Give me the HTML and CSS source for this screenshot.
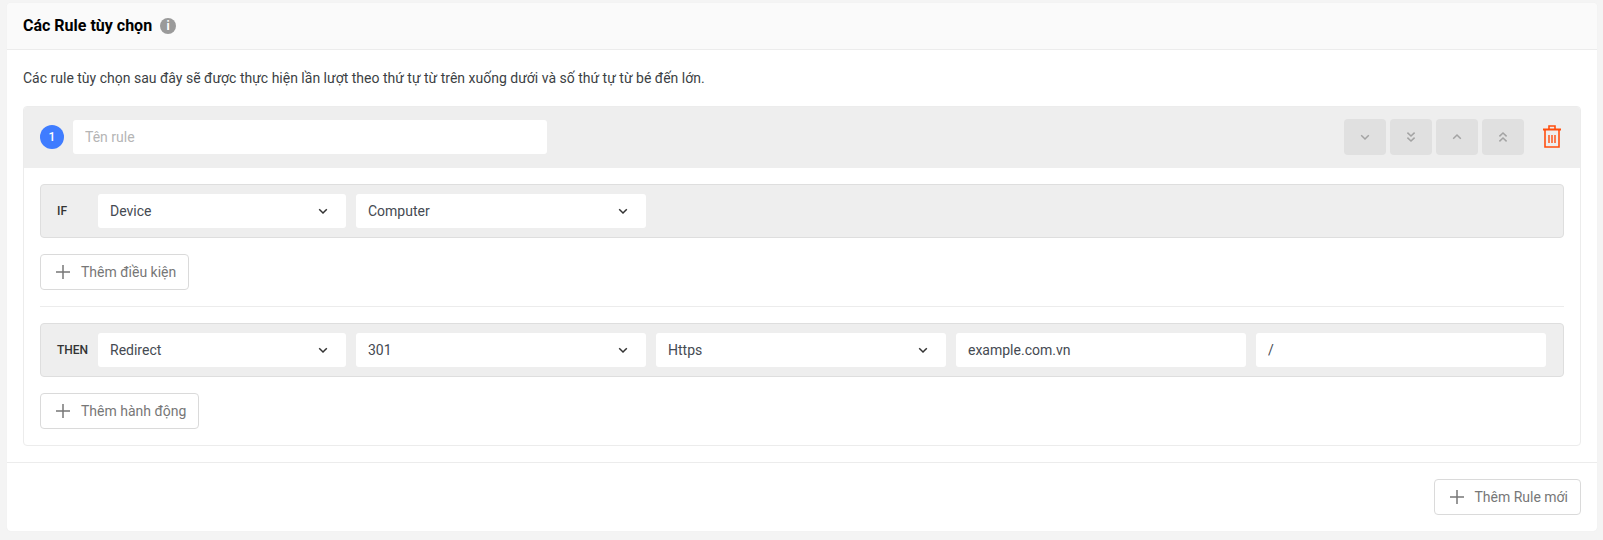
FILE: index.html
```html
<!DOCTYPE html>
<html lang="vi">
<head>
<meta charset="utf-8">
<title>Các Rule tùy chọn</title>
<link rel="stylesheet" href="styles.css">
</head>
<body>
<svg class="defs" width="0" height="0" aria-hidden="true">
  <symbol id="chev" viewBox="0 0 12 12"><path d="M2.2 4.2 6 8l3.8-3.8" fill="none" stroke="currentColor" stroke-width="1.5"/></symbol>
  <symbol id="chev2" viewBox="0 0 12 12"><path d="M2.4 1.6 6 5l3.6-3.4M2.4 6.6 6 10l3.6-3.4" fill="none" stroke="currentColor" stroke-width="1.5"/></symbol>
  <symbol id="plus" viewBox="0 0 14 14"><path d="M7 0v14M0 7h14" fill="none" stroke="currentColor" stroke-width="1.5"/></symbol>
</svg>
<main class="card">
  <header class="card-head">
    <h2 class="card-title">Các Rule tùy chọn</h2>
    <span class="info">i</span>
  </header>
  <section class="card-body">
    <p class="intro">Các rule tùy chọn sau đây sẽ được thực hiện lần lượt theo thứ tự từ trên xuống dưới và số thứ tự từ bé đến lớn.</p>
    <div class="rule">
      <div class="rule-head">
        <span class="num">1</span>
        <input class="field name" placeholder="Tên rule">
        <div class="moves">
          <button class="move"><svg class="mi"><use href="#chev"/></svg></button>
          <button class="move"><svg class="mi"><use href="#chev2"/></svg></button>
          <button class="move"><svg class="mi flip"><use href="#chev"/></svg></button>
          <button class="move"><svg class="mi flip"><use href="#chev2"/></svg></button>
        </div>
        <svg class="trash" viewBox="0 0 18 23">
          <path d="M0 4.500h18" fill="none" stroke="#ff4d0d" stroke-width="2"/>
          <path d="M6 4V1h6v3M2 5v17h14V5" fill="none" stroke="#ff4d0d" stroke-width="1.600"/>
          <path d="M6 10v8M9 10v8M12 10v8" fill="none" stroke="#ff4d0d" stroke-width="1.400"/>
        </svg>
      </div>
      <div class="rule-body">
        <div class="row">
          <span class="tag">IF</span>
          <div class="field select w248"><span>Device</span><svg class="sc"><use href="#chev"/></svg></div>
          <div class="field select"><span>Computer</span><svg class="sc"><use href="#chev"/></svg></div>
        </div>
        <button class="add"><svg class="pi"><use href="#plus"/></svg>Thêm điều kiện</button>
        <hr class="sep">
        <div class="row">
          <span class="tag">THEN</span>
          <div class="field select w248"><span>Redirect</span><svg class="sc"><use href="#chev"/></svg></div>
          <div class="field select"><span>301</span><svg class="sc"><use href="#chev"/></svg></div>
          <div class="field select"><span>Https</span><svg class="sc"><use href="#chev"/></svg></div>
          <input class="field w290" value="example.com.vn">
          <input class="field w290" value="/">
        </div>
        <button class="add"><svg class="pi"><use href="#plus"/></svg>Thêm hành động</button>
      </div>
    </div>
  </section>
  <footer class="card-foot">
    <button class="add"><svg class="pi"><use href="#plus"/></svg>Thêm Rule mới</button>
  </footer>
</main>
</body>
</html>
```
FILE: styles.css
```css
* { box-sizing: border-box; }
html, body { margin: 0; height: 540px; overflow: hidden; }
body {
  background: #f4f4f4;
  padding: 3px 6px 9px 7px;
  font-family: Roboto, "Noto Sans", sans-serif;
  font-size: 14px;
  color: #3d4148;
}
.defs { position: absolute; }
.card {
  height: 528px;
  background: #fff;
  border-radius: 4px;
  box-shadow: 0 0 1px #e4e4e4;
}
.card-head {
  height: 47px;
  background: #fafafa;
  border-bottom: 1px solid #ececec;
  border-radius: 4px 4px 0 0;
  padding: 0 16px;
  display: flex;
  align-items: center;
  gap: 8px;
}
.card-title { margin: 0; font-size: 16px; font-weight: 700; color: #000; line-height: 20px; }
.info {
  width: 16px; height: 16px; border-radius: 50%;
  background: #9a9a9a; color: #fff;
  font-size: 12px; font-weight: 700; line-height: 16px; text-align: center;
}
.card-body {
  height: 413px;
  padding: 0 16px;
  border-bottom: 1px solid #ececec;
}
.intro { margin: 0; padding-top: 18px; height: 56px; line-height: 20px; font-size: 14px; color: #3c3f44; }
.rule {
  height: 340px;
  border: 1px solid #ececec;
  border-radius: 4px;
  overflow: hidden;
}
.rule-head {
  height: 61px;
  background: #eeeeee;
  padding: 0 19px 2px 16px;
  display: flex;
  align-items: center;
}
.num {
  width: 24px; height: 24px; border-radius: 50%;
  background: #3f7cff; color: #fff;
  font-size: 12px; font-weight: 500; line-height: 24px; text-align: center;
  margin-right: 9px;
  flex: none;
}
.field {
  height: 34px;
  border: 0;
  border-radius: 3px;
  background: #fff;
  padding: 0 12px;
  font: 14px Roboto, "Noto Sans", sans-serif;
  color: #454a52;
  outline: 0;
}
.field::placeholder { color: #b5b5b5; }
.name { width: 474px; }
.moves { margin-left: auto; display: flex; gap: 4px; }
.move {
  width: 42px; height: 36px; padding: 0;
  border: 0; border-radius: 4px;
  background: #e0e0e0; color: #a3a3a3;
  display: flex; align-items: center; justify-content: center;
}
.mi { width: 12px; height: 12px; }
.flip { transform: scaleY(-1); }
.trash { width: 18px; height: 23px; margin-left: 19px; flex: none; }
.rule-body { padding: 16px; }
.rule-body .add { gap: 11px; }
.row {
  height: 54px;
  background: #eeeeee;
  border: 1px solid #dedede;
  border-radius: 4px;
  padding-left: 16px;
  display: flex;
  align-items: center;
  gap: 10px;
}
.tag { width: 31px; font-size: 12px; font-weight: 500; color: #333; flex: none; }
.select {
  width: 290px;
  display: flex;
  align-items: center;
  justify-content: space-between;
  flex: none;
}
.w248 { width: 248px; }
.w290 { width: 290px; flex: none; }
.sc { width: 12px; height: 12px; color: #333; margin-right: 5px; }
.add {
  height: 36px;
  margin-top: 16px;
  padding: 0 12px 0 15px;
  display: inline-flex;
  align-items: center;
  gap: 10px;
  background: #fff;
  border: 1px solid #dadada;
  border-radius: 4px;
  font: 14px Roboto, "Noto Sans", sans-serif;
  color: #777;
}
.pi { width: 14px; height: 14px; color: #777; }
.sep { height: 1px; margin: 16px 0; border: 0; background: #ececec; }
.card-foot { padding: 0 16px 0 0; display: flex; justify-content: flex-end; }
```
